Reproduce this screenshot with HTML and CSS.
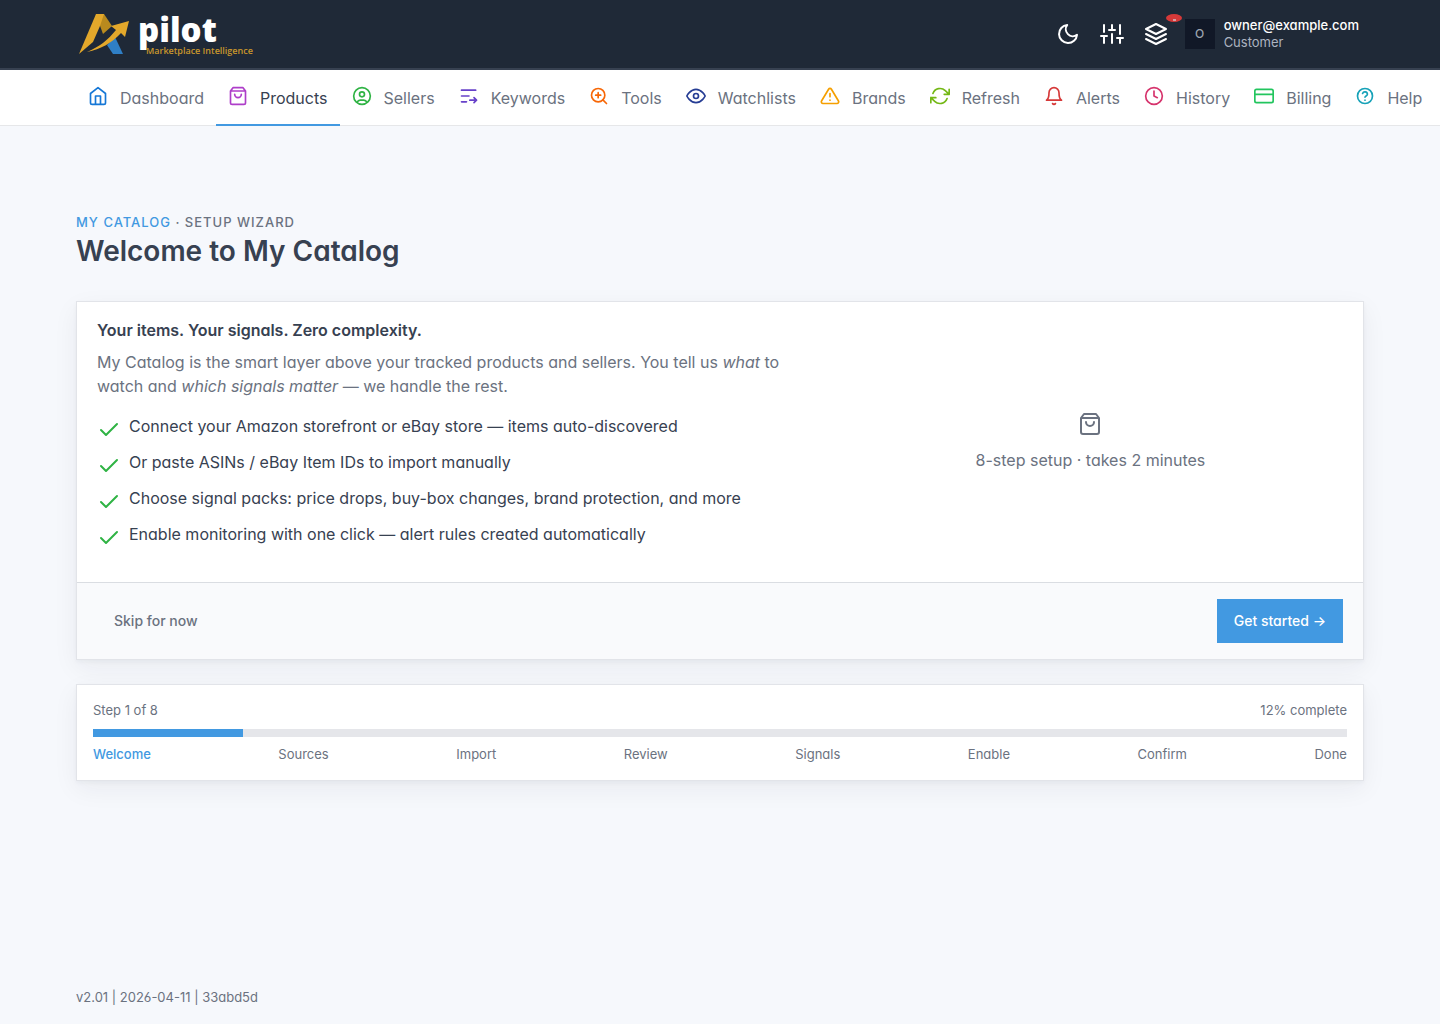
FILE: index.html
```html
<!DOCTYPE html>
<html lang="en">
<head>
    <meta charset="UTF-8">
    <meta name="viewport" content="width=device-width, initial-scale=1.0">
    <title>My Catalog - Setup Wizard</title>
    <link rel="stylesheet" href="styles.css">
</head>

<body>
    <header class="topbar">
        <div class="container topbar-inner">
            <a class="brand" href="#" aria-label="Apilot Marketplace Intelligence">
                <svg class="brand-mark" viewBox="0 0 54 44" aria-hidden="true">
                    <path fill="#2f7fc6" d="M29 33l8-8 8 17H35z"/>
                    <path fill="#b98a1e" d="M20 2h6l8 12-9 8-4-11z"/>
                    <path fill="#e3a82b" d="M18 2h8l-4 12-7 16L1 42z"/>
                    <path fill="#e3a82b" d="M9 40c12-5 21-12 29-22l-5-4 18-5-4 16-4-4C34 31 23 37 9 40z"/>
                </svg>
                <span class="brand-text">
                    <span class="brand-name">pilot</span>
                    <span class="brand-tagline">Marketplace Intelligence</span>
                </span>
            </a>

            <div class="topbar-actions">
                <button class="icon-button" type="button" aria-label="Toggle dark mode">
                    <svg class="icon" viewBox="0 0 24 24"><path d="M21 12.79A9 9 0 1 1 11.21 3 7 7 0 0 0 21 12.79z"/></svg>
                </button>
                <button class="icon-button" type="button" aria-label="Settings">
                    <svg class="icon" viewBox="0 0 24 24"><path d="M4 21v-7M4 10V3M12 21v-9M12 8V3M20 21v-5M20 12V3M1 14h6M9 8h6M17 16h6"/></svg>
                </button>
                <button class="icon-button" type="button" aria-label="Queue">
                    <svg class="icon" viewBox="0 0 24 24"><path d="M12 2L2 7l10 5 10-5-10-5zM2 17l10 5 10-5M2 12l10 5 10-5"/></svg>
                    <span class="badge"></span>
                </button>
                <a class="user" href="#">
                    <span class="avatar">O</span>
                    <span class="user-text">
                        <span class="user-email">owner@example.com</span>
                        <span class="user-role">Customer</span>
                    </span>
                </a>
            </div>
        </div>
    </header>

    <nav class="navbar">
        <div class="container nav-list">
            <a class="nav-link" href="#">
                <svg class="icon blue" viewBox="0 0 24 24"><path d="M3 9l9-7 9 7v11a2 2 0 0 1-2 2H5a2 2 0 0 1-2-2zM9 22V12h6v10"/></svg>
                <span>Dashboard</span>
            </a>
            <a class="nav-link active" href="#">
                <svg class="icon purple" viewBox="0 0 24 24"><path d="M6 2L3 6v14a2 2 0 0 0 2 2h14a2 2 0 0 0 2-2V6l-3-4zM3 6h18M16 10a4 4 0 0 1-8 0"/></svg>
                <span>Products</span>
            </a>
            <a class="nav-link" href="#">
                <svg class="icon green" viewBox="0 0 24 24"><circle cx="12" cy="12" r="10"/><circle cx="12" cy="10" r="3"/><path d="M6.2 19.5A4 4 0 0 1 10 17h4a4 4 0 0 1 3.8 2.5"/></svg>
                <span>Sellers</span>
            </a>
            <a class="nav-link" href="#">
                <svg class="icon indigo" viewBox="0 0 24 24"><path d="M3 5h17M3 12h9M3 19h6M13 17h8M18 14l3 3-3 3"/></svg>
                <span>Keywords</span>
            </a>
            <a class="nav-link" href="#">
                <svg class="icon orange" viewBox="0 0 24 24"><circle cx="11" cy="11" r="8"/><path d="M21 21l-4.35-4.35M11 8v6M8 11h6"/></svg>
                <span>Tools</span>
            </a>
            <a class="nav-link" href="#">
                <svg class="icon navy" viewBox="0 0 24 24"><path d="M1 12s4-8 11-8 11 8 11 8-4 8-11 8-11-8-11-8z"/><circle cx="12" cy="12" r="3"/></svg>
                <span>Watchlists</span>
            </a>
            <a class="nav-link" href="#">
                <svg class="icon amber" viewBox="0 0 24 24"><path d="M10.29 3.86L1.82 18a2 2 0 0 0 1.71 3h16.94a2 2 0 0 0 1.71-3L13.71 3.86a2 2 0 0 0-3.42 0zM12 9v4M12 17h.01"/></svg>
                <span>Brands</span>
            </a>
            <a class="nav-link" href="#">
                <svg class="icon lime" viewBox="0 0 24 24"><path d="M23 4v6h-6M1 20v-6h6M3.51 9a9 9 0 0 1 14.85-3.36L23 10M1 14l4.64 4.36A9 9 0 0 0 20.49 15"/></svg>
                <span>Refresh</span>
            </a>
            <a class="nav-link" href="#">
                <svg class="icon red" viewBox="0 0 24 24"><path d="M18 8A6 6 0 0 0 6 8c0 7-3 9-3 9h18s-3-2-3-9M13.73 21a2 2 0 0 1-3.46 0"/></svg>
                <span>Alerts</span>
            </a>
            <a class="nav-link" href="#">
                <svg class="icon pink" viewBox="0 0 24 24"><circle cx="12" cy="12" r="10"/><path d="M12 6v6l4 2"/></svg>
                <span>History</span>
            </a>
            <a class="nav-link" href="#">
                <svg class="icon emerald" viewBox="0 0 24 24"><rect x="1" y="4" width="22" height="16" rx="2"/><path d="M1 10h22"/></svg>
                <span>Billing</span>
            </a>
            <a class="nav-link" href="#">
                <svg class="icon teal" viewBox="0 0 24 24"><circle cx="12" cy="12" r="9"/><path d="M12 17h.01M9.1 9a3 3 0 0 1 5.8 1c0 2-2.9 2-2.9 3.500"/></svg>
                <span>Help</span>
            </a>
        </div>
    </nav>

    <main class="container page">
        <div class="pretitle"><a href="#">My Catalog</a> · Setup Wizard</div>
        <h1>Welcome to My Catalog</h1>

        <section class="card">
            <div class="card-body">
                <div class="intro">
                    <h2>Your items. Your signals. Zero complexity.</h2>
                    <p>My Catalog is the smart layer above your tracked products and sellers. You tell us <em>what</em> to watch and <em>which signals matter</em> — we handle the rest.</p>
                    <ul class="checklist">
                        <li>
                            <svg class="icon" viewBox="0 0 24 24"><path d="M20 6L9 17l-5-5"/></svg>
                            <span>Connect your Amazon storefront or eBay store — items auto-discovered</span>
                        </li>
                        <li>
                            <svg class="icon" viewBox="0 0 24 24"><path d="M20 6L9 17l-5-5"/></svg>
                            <span>Or paste ASINs / eBay Item IDs to import manually</span>
                        </li>
                        <li>
                            <svg class="icon" viewBox="0 0 24 24"><path d="M20 6L9 17l-5-5"/></svg>
                            <span>Choose signal packs: price drops, buy-box changes, brand protection, and more</span>
                        </li>
                        <li>
                            <svg class="icon" viewBox="0 0 24 24"><path d="M20 6L9 17l-5-5"/></svg>
                            <span>Enable monitoring with one click — alert rules created automatically</span>
                        </li>
                    </ul>
                </div>
                <div class="summary">
                    <svg class="icon" viewBox="0 0 24 24"><path d="M6 2L3 6v14a2 2 0 0 0 2 2h14a2 2 0 0 0 2-2V6l-3-4zM3 6h18M16 10a4 4 0 0 1-8 0"/></svg>
                    <span>8-step setup · takes 2 minutes</span>
                </div>
            </div>
            <div class="card-footer">
                <button class="btn btn-ghost" type="button">Skip for now</button>
                <button class="btn btn-primary" type="button">Get started →</button>
            </div>
        </section>

        <section class="card steps">
            <div class="steps-row">
                <span>Step 1 of 8</span>
                <span>12% complete</span>
            </div>
            <div class="progress" role="progressbar" aria-label="Setup progress" aria-valuenow="12" aria-valuemin="0" aria-valuemax="100">
                <div class="progress-bar" style="width: 12%"></div>
            </div>
            <div class="steps-row">
                <span class="current">Welcome</span>
                <span>Sources</span>
                <span>Import</span>
                <span>Review</span>
                <span>Signals</span>
                <span>Enable</span>
                <span>Confirm</span>
                <span>Done</span>
            </div>
        </section>
    </main>

    <footer class="container page-footer">v2.01 | 2026-04-11 | 33abd5d</footer>
</body>
</html>
```
FILE: styles.css
```css
* {
    box-sizing: border-box;
}

body {
    display: flex;
    flex-direction: column;
    min-height: 100vh;
    margin: 0;
    overflow-x: hidden;
    background: #f6f8fc;
    color: #374151;
    font-family: Inter, "Liberation Sans", sans-serif;
    font-feature-settings: "cv03", "cv04", "cv11";
    font-size: 16px;
    line-height: 24px;
}

a {
    color: #4299e1;
    text-decoration: none;
}

button {
    font: inherit;
    font-feature-settings: inherit;
    cursor: pointer;
}

.container {
    width: 100%;
    max-width: 1320px;
    margin: 0 auto;
    padding: 0 16px;
}

.icon {
    flex: none;
    width: 24px;
    height: 24px;
    fill: none;
    stroke: currentColor;
    stroke-width: 2;
    stroke-linecap: round;
    stroke-linejoin: round;
}

/* Top bar */
.topbar {
    background: #1f2937;
    border-bottom: 2px solid #374151;
}

.topbar-inner {
    display: flex;
    align-items: center;
    justify-content: space-between;
    height: 68px;
}

.brand {
    display: flex;
    align-items: center;
    gap: 6px;
    padding-left: 2px;
}

.brand-mark {
    width: 54px;
    height: 44px;
}

.brand-text {
    display: flex;
    flex-direction: column;
    font-family: "Open Sans", sans-serif;
    font-feature-settings: normal;
}

.brand-name {
    color: #fff;
    font-size: 33px;
    font-weight: 800;
    line-height: 36px;
}

.brand-tagline {
    margin-top: -2px;
    padding-left: 8px;
    color: #c8962c;
    font-size: 9px;
    font-weight: 600;
    line-height: 10px;
}

.topbar-actions {
    display: flex;
    align-items: center;
}

.icon-button {
    position: relative;
    display: flex;
    padding: 10px;
    border: 0;
    background: none;
    color: #fff;
}

.badge {
    position: absolute;
    top: 2px;
    right: -4px;
    width: 16px;
    height: 8px;
    border-radius: 50%;
    background: #d63939;
}

.badge::after {
    content: "";
    position: absolute;
    bottom: 1px;
    left: 7px;
    width: 3px;
    height: 2px;
    background: #d3a0a4;
}

.user {
    display: flex;
    align-items: center;
    gap: 8px;
    margin-left: 6px;
    padding-right: 5px;
}

.avatar {
    display: flex;
    align-items: center;
    justify-content: center;
    width: 32px;
    height: 32px;
    border: 1px solid #1f2937;
    background: #111827;
    color: #9ca3af;
    font-size: 12px;
    font-weight: 500;
}

.user-text {
    display: flex;
    flex-direction: column;
    font-size: 13px;
    line-height: 17px;
}

.user-email {
    color: #fff;
    font-weight: 500;
}

.user-role {
    color: #adb4c0;
}

/* Main navigation */
.navbar {
    background: #fff;
    border-bottom: 1px solid #e6e7e9;
}

.nav-list {
    display: flex;
}

.nav-link {
    display: flex;
    flex: none;
    gap: 12px;
    margin-bottom: -1px;
    padding: 16px 12px;
    color: #6b7280;
}

.nav-link .icon {
    width: 20px;
    height: 20px;
}

.nav-link.active {
    padding-bottom: 14px;
    border-bottom: 2px solid #4299e1;
    color: #374151;
}

.blue { color: #1577d6; }
.purple { color: #ae3ec9; }
.green { color: #2fb344; }
.indigo { color: #6741c9; }
.orange { color: #f76707; }
.navy { color: #263d94; }
.amber { color: #f59f00; }
.lime { color: #74b816; }
.red { color: #d63939; }
.pink { color: #d6336c; }
.emerald { color: #22c55e; }
.teal { color: #17a2b8; }

/* Page */
.page {
    flex: 1;
    padding-top: 88px;
}

.pretitle {
    color: #6b7280;
    font-size: 13px;
    font-weight: 500;
    letter-spacing: 1px;
    line-height: 16px;
    text-transform: uppercase;
}

h1 {
    margin: 3px 0 32px;
    font-size: 28px;
    font-weight: 600;
    line-height: 36px;
}

.card {
    margin-bottom: 24px;
    border: 1px solid #e2e4e9;
    background: #fff;
    box-shadow: 0 2px 4px rgba(31, 41, 55, 0.04), 0 8px 24px rgba(31, 41, 55, 0.06);
}

.card-body {
    display: grid;
    grid-template-columns: repeat(12, 1fr);
    column-gap: 24px;
    padding: 16px 20px;
}

.intro {
    grid-column: span 7;
}

.intro h2 {
    margin: 0 0 8px;
    font-size: 16px;
    font-weight: 600;
    line-height: 24px;
}

.intro p {
    margin: 0 0 16px;
    color: #6b7280;
}

.checklist {
    margin: 0 0 8px;
    padding: 0;
    list-style: none;
}

.checklist li {
    display: flex;
    gap: 8px;
    padding-bottom: 8px;
}

.checklist .icon {
    margin-top: 4px;
    color: #2fb344;
}

.summary {
    display: flex;
    grid-column: span 5;
    flex-direction: column;
    align-items: center;
    justify-content: center;
    gap: 12px;
    color: #6b7280;
}

.card-footer {
    display: flex;
    justify-content: space-between;
    padding: 16px 20px;
    border-top: 1px solid #dadde2;
    background: #f9fafc;
}

.btn {
    padding: 11px 16px;
    border: 1px solid transparent;
    font-size: 14px;
    font-weight: 500;
    line-height: 20px;
}

.btn-ghost {
    background: none;
    color: #6b7280;
}

.btn-primary {
    background: #4299e1;
    color: #fff;
}

/* Wizard progress */
.steps {
    padding: 16px;
    color: #6b7280;
    font-size: 13px;
    line-height: 19px;
}

.steps-row {
    display: flex;
    justify-content: space-between;
}

.progress {
    height: 8px;
    margin: 9px 0 8px;
    background: #e5e6ea;
}

.progress-bar {
    height: 100%;
    background: #4299e1;
}

.current {
    color: #4299e1;
    font-weight: 500;
}

.page-footer {
    padding-bottom: 17px;
    color: #6b7280;
    font-size: 13px;
    line-height: 20px;
}
```
